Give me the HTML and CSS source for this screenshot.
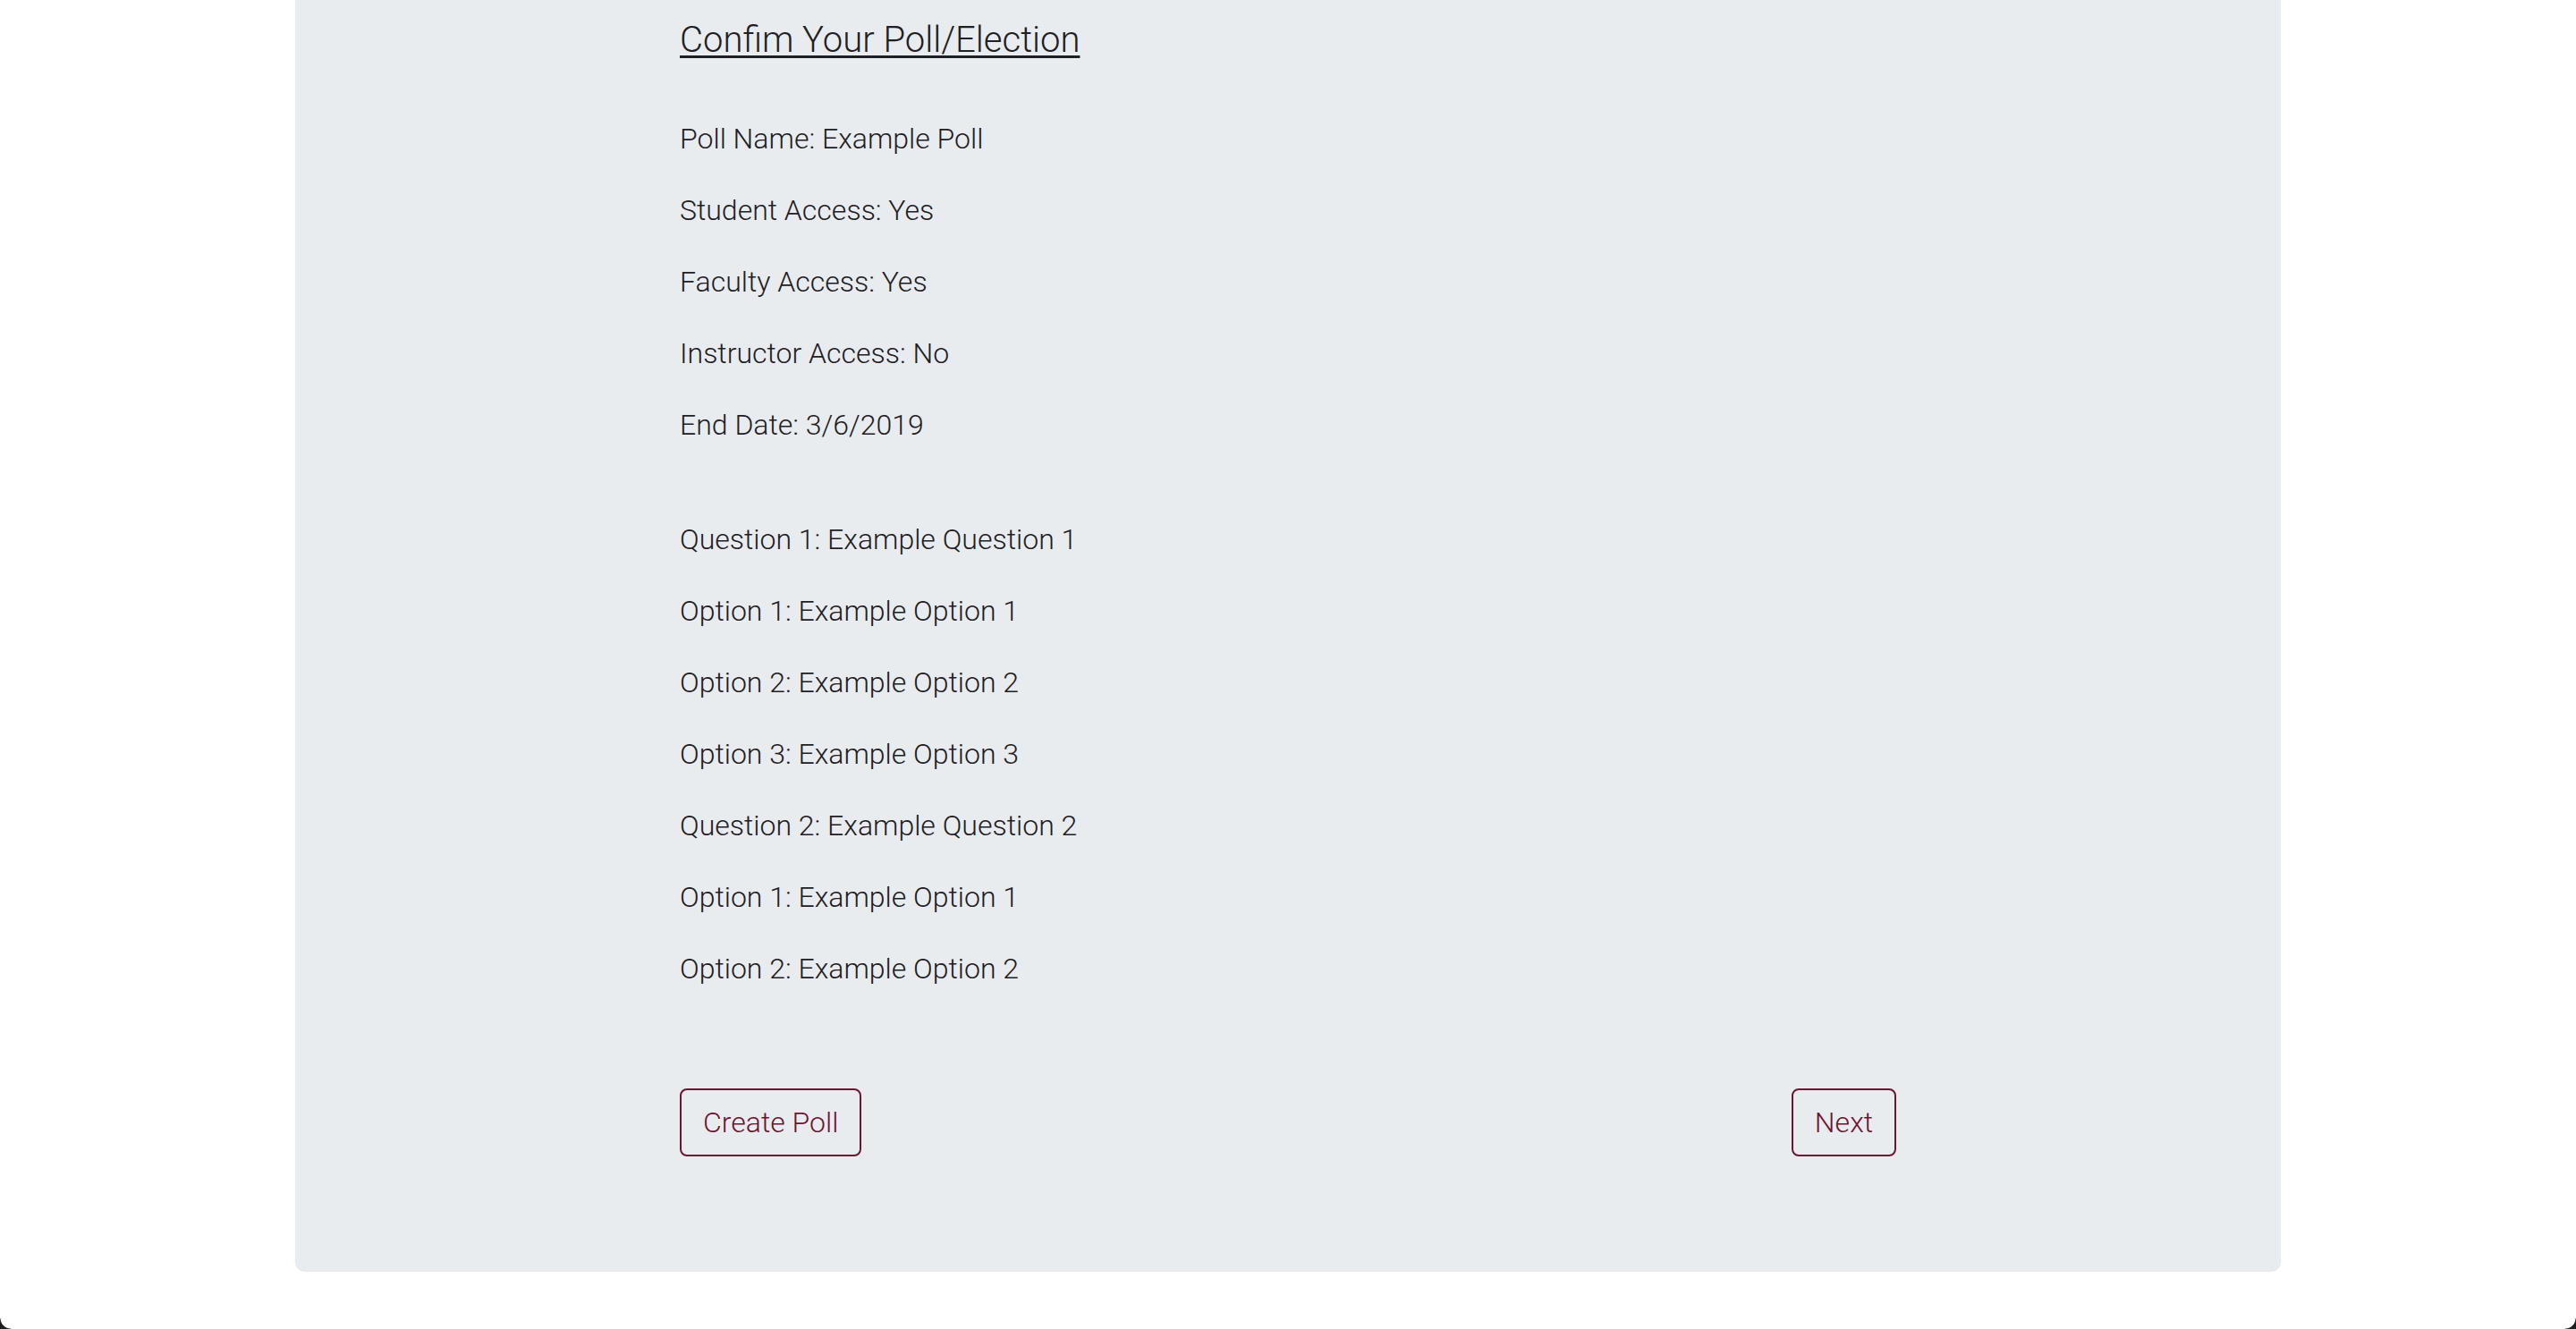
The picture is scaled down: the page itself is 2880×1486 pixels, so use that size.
FILE: index.html
```html
<!DOCTYPE html>
<html lang="en">
<head>
<meta charset="utf-8">
<title>Confirm Poll</title>
<link rel="stylesheet" href="styles.css">
</head>
<body>
<div class="container">
  <div class="jumbotron">
    <div class="content">
      <h5 class="title">Confim Your Poll/Election</h5>
      <p>Poll Name: Example Poll</p>
      <p>Student Access: Yes</p>
      <p>Faculty Access: Yes</p>
      <p>Instructor Access: No</p>
      <p class="section-end">End Date: 3/6/2019</p>
      <p>Question 1: Example Question 1</p>
      <p>Option 1: Example Option 1</p>
      <p>Option 2: Example Option 2</p>
      <p>Option 3: Example Option 3</p>
      <p>Question 2: Example Question 2</p>
      <p>Option 1: Example Option 1</p>
      <p>Option 2: Example Option 2</p>
      <div class="actions">
        <button class="btn">Create Poll</button>
        <button class="btn">Next</button>
      </div>
    </div>
  </div>
</div>
<div class="corner corner-left"></div>
<div class="corner corner-right"></div>
</body>
</html>
```
FILE: styles.css
```css
html, body {
  margin: 0;
  padding: 0;
  background: #ffffff;
}
body {
  font-family: Roboto, "Liberation Sans", sans-serif;
  font-weight: 300;
  color: #1d2024;
  min-height: 1486px;
  overflow: hidden;
}
.container {
  width: 2220px;
  margin: 0 auto;
}
.jumbotron {
  background: #e9ecef;
  border-radius: 0 0 10px 10px;
  padding: 21px 0 129px;
  margin-bottom: 64px;
}
.content {
  width: 1360px;
  margin: 0 auto;
}
.title {
  font-size: 40px;
  font-weight: 300;
  line-height: 48px;
  margin: 0 0 62px;
  text-decoration: underline;
  text-decoration-thickness: 3px;
  text-underline-offset: 4px;
  display: inline-block;
}
.content p {
  font-size: 32px;
  line-height: 48px;
  margin: 0 0 32px;
}
.content p.section-end {
  margin-bottom: 80px;
}
.actions {
  display: flex;
  justify-content: space-between;
  margin-top: 110px;
}
.btn {
  font-family: Roboto, "Liberation Sans", sans-serif;
  font-weight: 300;
  font-size: 32px;
  line-height: 48px;
  padding: 12px 24px;
  border: 2px solid #6d1430;
  border-radius: 8px;
  background: transparent;
  color: #6d1430;
  cursor: pointer;
}
.corner {
  position: fixed;
  bottom: 0;
  width: 12px;
  height: 12px;
}
.corner-left {
  left: 0;
  background: radial-gradient(circle at 12px 0, transparent 11px, #1e1e1e 12px);
}
.corner-right {
  right: 0;
  background: radial-gradient(circle at 0 0, transparent 11px, #1e1e1e 12px);
}
```
